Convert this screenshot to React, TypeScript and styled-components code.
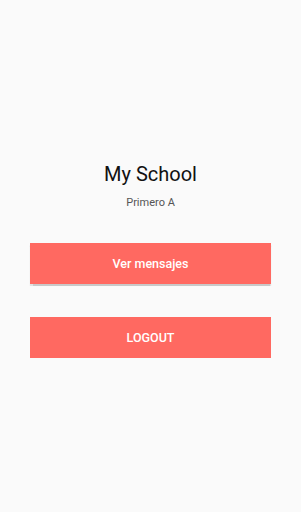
import React from "react";
import styled, { createGlobalStyle } from "styled-components";

const Global = createGlobalStyle`
  html, body { margin: 0; padding: 0; background: #fafafa; }
  body { font-family: Roboto, "Noto Sans", sans-serif; }
`;

const Screen = styled.div`
  width: 301px;
  height: 512px;
  background: #fafafa;
  display: flex;
  flex-direction: column;
  align-items: center;
  padding-top: 161px;
  box-sizing: border-box;
`;

const Title = styled.div`
  font-size: 20px;
  color: #111;
  line-height: 26px;
`;

const Subtitle = styled.div`
  margin-top: 9px;
  font-size: 11px;
  color: #555;
  line-height: 14px;
`;

const Button = styled.button<{ $shadow?: boolean }>`
  width: 241px;
  height: 41px;
  border: none;
  background: #ff6961;
  color: #fff;
  font-family: Roboto, sans-serif;
  font-weight: 500;
  font-size: 12.5px;
  box-shadow: ${(p) => (p.$shadow ? "0 1.5px 1px rgba(0,0,0,0.2)" : "none")};
  padding: 0;
`;

const Actions = styled.div`
  margin-top: 33px;
  display: flex;
  flex-direction: column;
  gap: 33px;
`;

export default function App() {
  return (
    <>
      <Global />
      <Screen>
        <Title>My School</Title>
        <Subtitle>Primero A</Subtitle>
        <Actions>
          <Button $shadow>Ver mensajes</Button>
          <Button>LOGOUT</Button>
        </Actions>
      </Screen>
    </>
  );
}
